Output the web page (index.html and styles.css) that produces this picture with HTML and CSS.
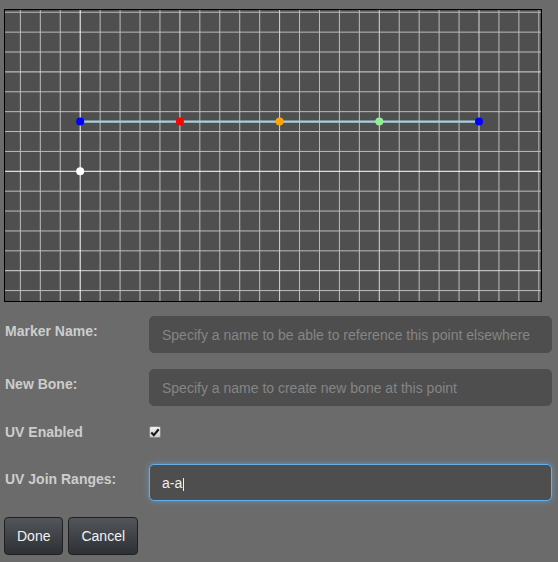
FILE: index.html
```html
<!DOCTYPE html>
<html>
<head>
<meta charset="utf-8">
<link rel="stylesheet" href="styles.css">
</head>
<body>
<div class="app">
  <div class="stage">
    <svg class="grid" width="536" height="291" viewBox="0 0 536 291">
      <g class="minor">
        <line x1="15.38" y1="0" x2="15.38" y2="291"/>
        <line x1="35.32" y1="0" x2="35.32" y2="291"/>
        <line x1="55.26" y1="0" x2="55.26" y2="291"/>
        <line x1="95.14" y1="0" x2="95.14" y2="291"/>
        <line x1="115.08" y1="0" x2="115.08" y2="291"/>
        <line x1="135.02" y1="0" x2="135.02" y2="291"/>
        <line x1="154.96" y1="0" x2="154.96" y2="291"/>
        <line x1="194.84" y1="0" x2="194.84" y2="291"/>
        <line x1="214.78" y1="0" x2="214.78" y2="291"/>
        <line x1="234.72" y1="0" x2="234.72" y2="291"/>
        <line x1="254.66" y1="0" x2="254.66" y2="291"/>
        <line x1="294.54" y1="0" x2="294.54" y2="291"/>
        <line x1="314.48" y1="0" x2="314.48" y2="291"/>
        <line x1="334.42" y1="0" x2="334.42" y2="291"/>
        <line x1="354.36" y1="0" x2="354.36" y2="291"/>
        <line x1="394.24" y1="0" x2="394.24" y2="291"/>
        <line x1="414.18" y1="0" x2="414.18" y2="291"/>
        <line x1="434.12" y1="0" x2="434.12" y2="291"/>
        <line x1="454.06" y1="0" x2="454.06" y2="291"/>
        <line x1="493.94" y1="0" x2="493.94" y2="291"/>
        <line x1="513.88" y1="0" x2="513.88" y2="291"/>
        <line x1="533.82" y1="0" x2="533.82" y2="291"/>
        <line x1="0" y1="2.26" x2="536" y2="2.26"/>
        <line x1="0" y1="22.14" x2="536" y2="22.14"/>
        <line x1="0" y1="42.02" x2="536" y2="42.02"/>
        <line x1="0" y1="81.78" x2="536" y2="81.78"/>
        <line x1="0" y1="101.66" x2="536" y2="101.66"/>
        <line x1="0" y1="121.54" x2="536" y2="121.54"/>
        <line x1="0" y1="141.42" x2="536" y2="141.42"/>
        <line x1="0" y1="181.18" x2="536" y2="181.18"/>
        <line x1="0" y1="201.06" x2="536" y2="201.06"/>
        <line x1="0" y1="220.94" x2="536" y2="220.94"/>
        <line x1="0" y1="240.82" x2="536" y2="240.82"/>
        <line x1="0" y1="280.58" x2="536" y2="280.58"/>
      </g>
      <g class="major">
        <line x1="174.9" y1="0" x2="174.9" y2="291"/>
        <line x1="274.6" y1="0" x2="274.6" y2="291"/>
        <line x1="374.3" y1="0" x2="374.3" y2="291"/>
        <line x1="474" y1="0" x2="474" y2="291"/>
        <line x1="0" y1="61.9" x2="536" y2="61.9"/>
        <line x1="0" y1="260.7" x2="536" y2="260.7"/>
      </g>
      <g class="axis">
        <line x1="75.2" y1="0" x2="75.2" y2="291"/>
        <line x1="0" y1="161.3" x2="536" y2="161.3"/>
      </g>
      <line class="bone" x1="75.2" y1="111.6" x2="474" y2="111.6"/>
      <circle cx="75.2" cy="111.6" r="4" fill="#0000ff"/>
      <circle cx="174.9" cy="111.6" r="4" fill="#ff0000"/>
      <circle cx="274.6" cy="111.6" r="4" fill="#ffa500"/>
      <circle cx="374.3" cy="111.6" r="4" fill="#90ee90"/>
      <circle cx="474" cy="111.6" r="4" fill="#0000ff"/>
      <circle cx="75.2" cy="161.3" r="4" fill="#ffffff"/>
    </svg>
  </div>

  <form class="form">
    <div class="field">
      <label class="label">Marker Name:</label>
      <input class="text" type="text" placeholder="Specify a name to be able to reference this point elsewhere">
    </div>
    <div class="field">
      <label class="label">New Bone:</label>
      <input class="text" type="text" placeholder="Specify a name to create new bone at this point">
    </div>
    <div class="field check-row">
      <label class="label">UV Enabled</label>
      <span class="checkbox"><svg width="10" height="9" viewBox="0 0 10 9"><path d="M1.3 4.6 L3.8 7.2 L8.7 1.3" fill="none" stroke="#1a1a1a" stroke-width="2.2" stroke-linejoin="miter"/></svg></span>
    </div>
    <div class="field">
      <label class="label">UV Join Ranges:</label>
      <div class="input-wrap">
        <input class="text focused" type="text" value="a-a">
        <span class="caret"></span>
      </div>
    </div>
    <div class="buttons">
      <button type="button" class="btn">Done</button>
      <button type="button" class="btn">Cancel</button>
    </div>
  </form>
</div>
</body>
</html>
```
FILE: styles.css
```css
html, body {
  margin: 0;
  padding: 0;
  background: #6b6b6b;
}
body {
  font-family: "Liberation Sans", Arial, sans-serif;
  font-size: 14px;
}
.app {
  padding: 9px 6px 0 4px;
}
.stage {
  width: 536px;
  height: 291px;
  border: 1px solid #000;
  background: #4f4f4f;
}
.grid {
  display: block;
}
.minor line {
  stroke: #bdbdbd;
  stroke-width: 1;
}
.major line {
  stroke: #d8d8d8;
  stroke-width: 1;
}
.axis line {
  stroke: #ffffff;
  stroke-width: 1;
}
.bone {
  stroke: #a6d2e0;
  stroke-width: 2.2;
}
.form {
  margin: 14px 0 0 0;
  display: flex;
  flex-direction: column;
}
.field {
  display: grid;
  grid-template-columns: 145px 403px;
  align-items: start;
  margin-bottom: 16px;
}
.label {
  display: block;
  padding: 7px 0 0 1px;
  font-weight: bold;
  font-size: 14px;
  line-height: 16px;
  color: #cdcdcd;
}
.text {
  box-sizing: border-box;
  width: 403px;
  height: 37px;
  margin: 0;
  padding: 0 12px;
  border: 1px solid #4e4e4e;
  border-radius: 5px;
  background: #4e4e4e;
  color: #efefef;
  font-family: "Liberation Sans", Arial, sans-serif;
  font-size: 14px;
  outline: none;
}
.text::placeholder {
  color: #858585;
}
.text.focused {
  border-color: #66afe9;
  box-shadow: 0 0 6px rgba(102, 175, 233, 0.6);
}
.check-row {
  margin-top: 2px;
  margin-bottom: 24px;
}
.check-row .label {
  padding-top: 0;
}
.checkbox {
  box-sizing: border-box;
  display: flex;
  align-items: center;
  justify-content: center;
  width: 12px;
  height: 12px;
  margin-top: 2px;
  border: 1px solid #8a8a8a;
  border-radius: 2px;
  background: linear-gradient(#f2f2f2, #cfcfcf);
}
.input-wrap {
  position: relative;
  width: 403px;
  height: 37px;
}
.caret {
  position: absolute;
  left: 34px;
  top: 14px;
  width: 1px;
  height: 13px;
  background: #f0f0f0;
}
.buttons {
  display: flex;
  gap: 5px;
}
.btn {
  box-sizing: border-box;
  height: 38px;
  margin: 0;
  padding: 0 12px;
  border: 1px solid #1f2022;
  border-radius: 4px;
  background: linear-gradient(#52565b, #2d3034);
  color: #f2f2f2;
  font-family: "Liberation Sans", Arial, sans-serif;
  font-size: 14px;
}
```
